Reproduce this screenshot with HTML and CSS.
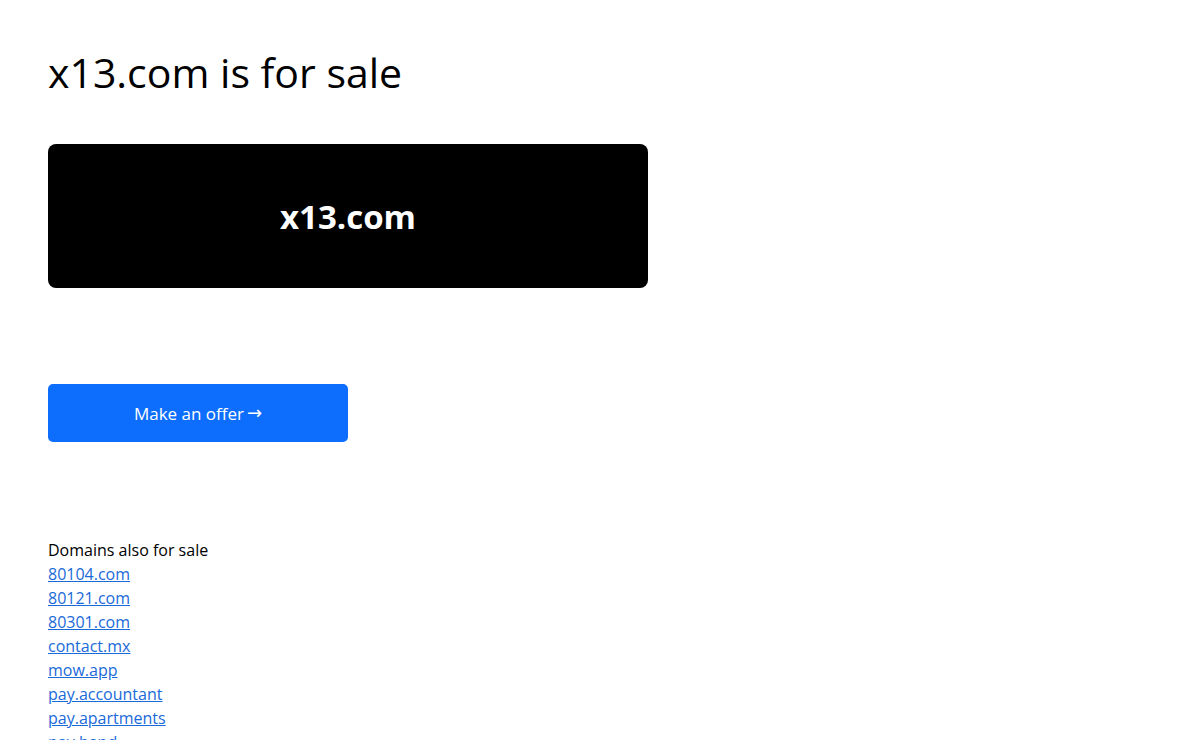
FILE: index.html
```html
<!doctype html>
<html lang="en">
  <head>
    <meta charset="UTF-8" />
    <meta name="viewport" content="width=device-width, initial-scale=1.0" />
    <title>x13.com is for sale</title>
    <link rel="stylesheet" href="styles.css">
  </head>
  <body>
    <div class="container">
      <h1>x13.com is for sale</h1>

      <div class="domain-card">
        <span class="domain-name">x13.com</span>
      </div>

      <a class="offer-btn" href="#">Make an offer <span class="arrow">&rarr;</span></a>

      <div class="other-domains">
        <p class="other-title">Domains also for sale</p>
        <ul class="domain-list">
          <li><a href="#">80104.com</a></li>
          <li><a href="#">80121.com</a></li>
          <li><a href="#">80301.com</a></li>
          <li><a href="#">contact.mx</a></li>
          <li><a href="#">mow.app</a></li>
          <li><a href="#">pay.accountant</a></li>
          <li><a href="#">pay.apartments</a></li>
          <li><a href="#">pay.band</a></li>
          <li><a href="#">pay.bargains</a></li>
        </ul>
      </div>
    </div>
  </body>
</html>
```

FILE: styles.css
```css
body {
  font-family: 'Open Sans', 'Noto Sans', sans-serif;
  margin: 0;
  padding: 0;
  color: #000;
  background: #fff;
}
.container {
  padding: 40px 48px;
}
h1 {
  font-size: 41px;
  font-weight: 400;
  line-height: 64px;
  margin: 0 0 40px;
}
.domain-card {
  width: 600px;
  height: 144px;
  background: #000;
  border-radius: 8px;
  display: flex;
  align-items: center;
  justify-content: center;
}
.domain-name {
  color: #fff;
  font-size: 33px;
  font-weight: 700;
}
.offer-btn {
  display: flex;
  align-items: center;
  justify-content: center;
  gap: 3px;
  width: 300px;
  height: 58px;
  margin-top: 96px;
  background: #0d6efd;
  color: #fff;
  border-radius: 5px;
  font-size: 17px;
  text-decoration: none;
}
.arrow {
  font-family: 'DejaVu Sans', sans-serif;
  font-size: 18px;
  line-height: 1;
}
.other-domains {
  margin-top: 96px;
  font-size: 16px;
  line-height: 24px;
}
.other-title {
  margin: 0;
}
.domain-list {
  list-style: none;
  margin: 0;
  padding: 0;
}
.domain-list a {
  color: #1a6ad9;
  text-decoration: underline;
}
```
